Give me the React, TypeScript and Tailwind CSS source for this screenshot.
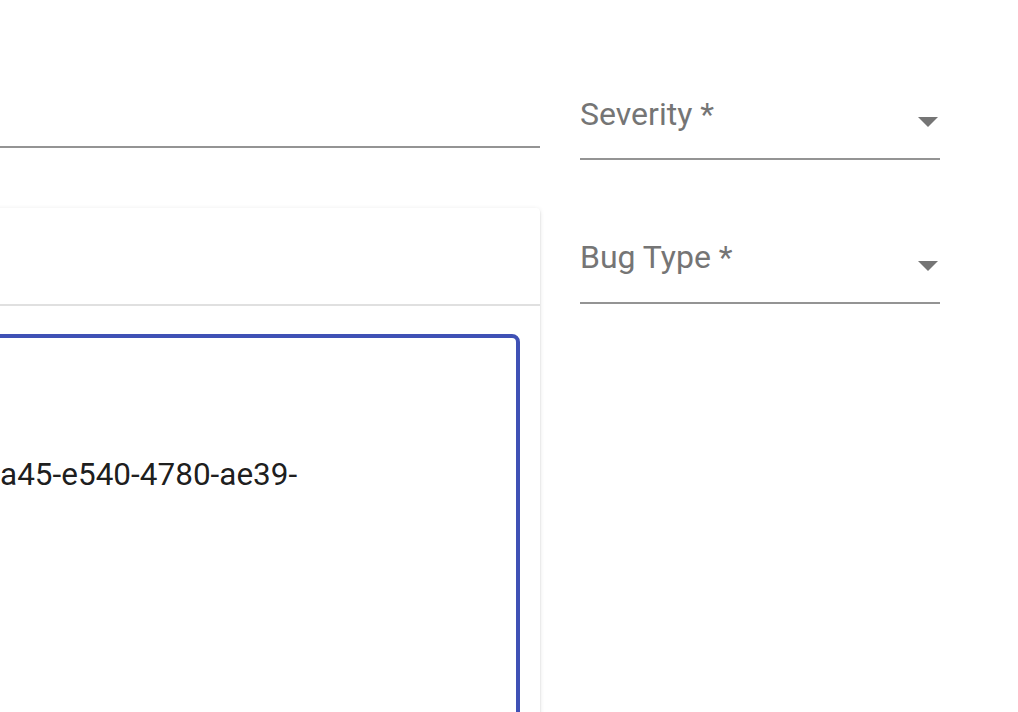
import React from 'react';

function DropArrow() {
  return (
    <svg width="20" height="10" viewBox="0 0 20 10" className="shrink-0">
      <path d="M0 0L10 10L20 0Z" fill="#757575" />
    </svg>
  );
}

function SelectField({ label, top, arrowTop, bottom }: { label: string; top: number; arrowTop: number; bottom: number }) {
  return (
    <div
      className="flex items-start justify-between border-b-2 border-[#949494]"
      style={{ paddingTop: top, paddingBottom: bottom }}
    >
      <span className="text-[32px] leading-[32px] text-[#757575]">{label}</span>
      <div className="mr-[2px]" style={{ marginTop: arrowTop }}>
        <DropArrow />
      </div>
    </div>
  );
}

export default function App() {
  return (
    <div
      className="w-[1018px] h-[712px] overflow-hidden bg-white flex items-start"
      style={{ fontFamily: 'Roboto, "Liberation Sans", sans-serif' }}
    >
      {/* left column, starts off screen */}
      <div className="ml-[-100px] w-[640px] shrink-0 flex flex-col">
        <div className="h-[148px] border-b-2 border-[#949494]" />
        <div className="mt-[60px] bg-white rounded-[4px] shadow-[0_2px_2px_0_rgba(0,0,0,0.14),0_3px_2px_-2px_rgba(0,0,0,0.12),0_1px_5px_0_rgba(0,0,0,0.1)] flex flex-col">
          <div className="h-[98px] border-b-2 border-[#e0e0e0]" />
          <div className="pt-[28px] px-[20px] pb-[20px]">
            <div className="h-[520px] border-4 border-[#3f51b5] rounded-lg pl-[76px] pt-[118px]">
              <p className="text-[31.5px] leading-[38px] text-[rgba(0,0,0,0.9)] whitespace-nowrap">
                a45-e540-4780-ae39-
              </p>
            </div>
          </div>
        </div>
      </div>

      {/* right column */}
      <div className="ml-[40px] w-[360px] shrink-0 flex flex-col">
        <SelectField label="Severity *" top={98} arrowTop={19} bottom={28} />
        <div className="mt-[81px]">
          <SelectField label="Bug Type *" top={0} arrowTop={20} bottom={29} />
        </div>
      </div>
    </div>
  );
}
